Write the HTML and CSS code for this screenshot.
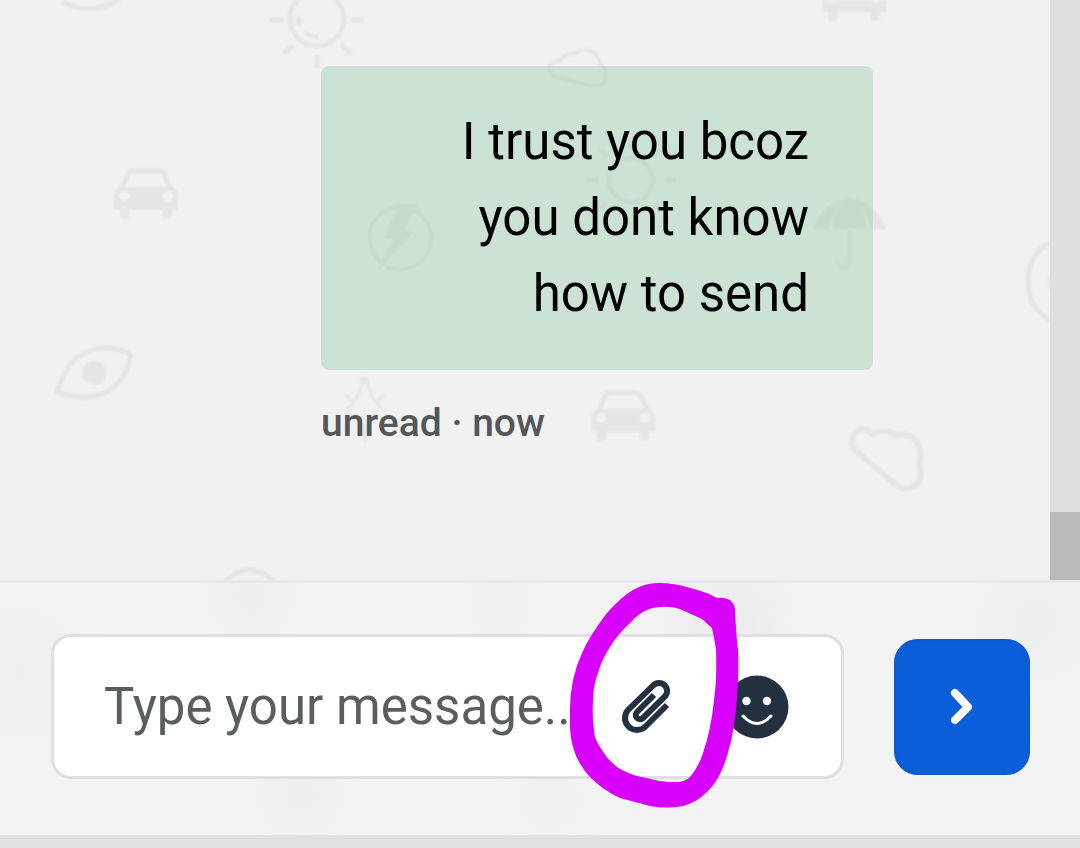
FILE: index.html
```html
<!DOCTYPE html>
<html lang="en">
<head>
<meta charset="utf-8">
<meta name="viewport" content="width=device-width, initial-scale=1">
<title>Chat</title>
<link rel="stylesheet" href="styles.css">
</head>
<body>
<div class="app">
  <main class="chat">
    <svg class="wallpaper" width="1050" height="580" viewBox="0 0 1050 580" fill="none" stroke="#000" stroke-width="5" aria-hidden="true">
      <defs>
        <g id="car">
          <path d="M7 22 L14 6 Q16 3 19 3 H45 Q48 3 50 6 L57 22" stroke-width="5"/>
          <path fill="#000" stroke="none" fill-rule="evenodd" d="M6 19H58Q64 21 64 28V42H58V48Q58 51 54 51H52Q49 51 49 48V42H15V48Q15 51 11 51H9Q6 51 6 48V42H0V28Q0 21 6 19ZM10 23a5 5 0 1 0 .1 0ZM54 23a5 5 0 1 0 .1 0Z"/>
        </g>
      </defs>
      <path d="M61 1 Q90 17 120 -1"/>
      <g>
        <circle cx="317" cy="19" r="27"/>
        <path d="M299 16V26 M305 31Q310 37 318 37"/>
        <path d="M269 20H284 M351 20H364 M284 54L293 45 M341 44L351 54 M317 55V68" stroke-width="5"/>
      </g>
      <use href="#car" x="114" y="168"/>
      <use href="#car" x="822" y="-30"/>
      <use href="#car" x="591" y="390"/>
      <path d="M559 78 Q549 76 549 67 Q550 60 560 61 Q564 53 575 54 Q582 48 591 51 Q598 54 600 63 Q608 70 606 77 Q603 88 592 86Z" stroke-width="4"/>
      <path d="M57 392 Q69 349 105 348 Q122 348 131 355 Q126 380 108 391 Q88 403 57 392Z"/>
      <circle cx="94" cy="373" r="12" fill="#000" stroke="none"/>
      <g>
        <path d="M402 207 A31 31 0 0 0 381 262 M386 267 A31 31 0 0 0 413 210" stroke-width="4"/>
        <path d="M400 204H418L405 230H416L377 272L392 239H382Z" fill="#000" stroke="none"/>
      </g>
      <circle cx="631" cy="180" r="22"/>
      <path d="M587 180H599 M664 180H676 M600 149L608 157 M655 156L662 149 M606 203L600 209 M654 203L660 209 M631 143V150" stroke-width="6"/>
      <g>
        <path d="M849 193V197 Q876 201 886 229H870 Q865 208 851 198 Q866 210 867 229H832 Q833 209 848 198 Q834 207 829 229H813 Q822 201 849 197" fill="#000" stroke="none"/>
        <path d="M850 231V262 Q849 269 843 268 Q838 267 837 260"/>
      </g>
      <path d="M1050 243 Q1028 254 1028 282 Q1028 308 1050 320"/>
      <path d="M1050 273Q1045 282 1050 292Z" fill="#000" stroke="none"/>
      <g stroke-width="3">
        <path d="M364 378 Q361 384 359 393 Q355 402 347 409 M365 378 Q370 390 372 397 Q377 402 381 410 M345 395L352 401 M384 395L377 401 M351 413L358 420 M377 413L371 420 M365 418V443"/>
        <circle cx="364" cy="380" r="4" fill="#000" stroke="none"/>
      </g>
      <path d="M854 449 L896 485 Q907 492 917 485 Q924 477 919 464 Q924 451 916 441 Q909 431 896 436 Q890 427 872 434 Q863 425 854 433 Q850 441 854 449Z" stroke-width="6"/>
      <path d="M225 582 Q248 558 276 582"/>
    </svg>
    <article class="message">
      <p class="bubble">I trust you bcoz you dont know how to send</p>
      <p class="status">unread · now</p>
    </article>
    <div class="scroll-track"><div class="scroll-thumb"></div></div>
  </main>
  <form class="composer">
    <div class="field">
      <input class="field-input" type="text" aria-label="Message" placeholder="Type your message...">
      <div class="field-actions">
        <button class="icon-button" type="button" aria-label="Attach a file">
          <svg width="64" height="64" viewBox="0 0 64 64" fill="none" stroke="#22303f" stroke-width="6">
            <path d="M54 30 L32.5 51.5 A12 12 0 0 1 15.5 34.5 L40.3 10.3 A8 8 0 0 1 51.7 21.7 L30 43 A4.2 4.2 0 0 1 24 37 L41 20"/>
          </svg>
        </button>
        <button class="icon-button" type="button" aria-label="Insert emoji">
          <svg width="64" height="64" viewBox="0 0 64 64">
            <circle cx="32" cy="32" r="31.5" fill="#22303f"/>
            <circle cx="21.5" cy="26" r="4.2" fill="#fff"/><circle cx="42" cy="26" r="4.2" fill="#fff"/>
            <path d="M18 41Q32 56 46 41" fill="none" stroke="#fff" stroke-width="3" stroke-linecap="round"/>
          </svg>
        </button>
      </div>
    </div>
    <button class="send" type="submit" aria-label="Send">
      <svg width="48" height="48" viewBox="0 0 48 48" fill="none" stroke="#fff" stroke-width="8" stroke-linecap="round" stroke-linejoin="round"><path d="M17 10L30 24L17 37"/></svg>
    </button>
  </form>
  <div class="bottom-edge"></div>
  <svg class="marker" width="180" height="232" viewBox="565 580 180 232" aria-hidden="true">
    <path fill="#d800fb" fill-rule="evenodd" d="M658 583 Q675 583 690 588 Q707 592 717 598 Q724 597 730 600 Q735 604 735 611 Q736 633 738 650 Q739 672 737 697 Q735 731 727 756 Q720 780 707 792 Q697 802 683 806 Q667 809 650 806 L620 798 Q604 791 590 777 Q577 763 573 747 Q569 732 570 715 Q569 681 582 653 Q590 635 607 613 Q621 597 633 590 Q645 583 658 583Z M660 607 Q671 606 680 609 L702 619 L712 628 Q715 642 716 650 Q717 679 714 700 Q711 730 703 753 Q698 768 690 777 Q684 783 673 782 Q660 782 647 778 Q633 776 620 769 Q608 761 602 750 Q594 739 594 730 Q592 716 593 703 Q593 685 598 673 Q602 659 610 647 Q617 635 630 623 Q639 613 647 610 Q653 607 660 607Z"/>
  </svg>
</div>
</body>
</html>
```
FILE: styles.css
```css
* { box-sizing: border-box; }

body {
  margin: 0;
  font-family: Roboto, "Liberation Sans", sans-serif;
  background: #f1f1f1;
}

.app {
  position: relative;
  display: flex;
  flex-direction: column;
  min-height: 100vh;
  overflow: hidden;
}

.chat {
  position: relative;
  display: flex;
  flex: 1;
  justify-content: flex-end;
}

.wallpaper {
  position: absolute;
  top: 0;
  left: 0;
  opacity: 0.045;
  filter: blur(1px);
}

.message {
  position: relative;
  width: 552px;
  margin: 66px 177px 132px 24px;
}

.bubble {
  margin: 0;
  padding: 38px 64px;
  border-radius: 8px;
  background: rgba(150, 207, 170, 0.4);
  color: #000;
  font-size: 51px;
  line-height: 76px;
  text-align: right;
}

.status {
  margin: 28px 0 0;
  color: #54575a;
  font-size: 39px;
  font-weight: 500;
  line-height: 50px;
}

.scroll-track {
  position: relative;
  display: flex;
  align-items: flex-end;
  width: 30px;
  background: #dfdfdf;
}

.scroll-thumb {
  width: 100%;
  height: 68px;
  background: #bababa;
}

.composer {
  display: flex;
  align-items: center;
  gap: 50px;
  padding: 51px 50px 56px 51px;
  border-top: 3px solid #e8e8f0;
  background:
    radial-gradient(circle at 250px 14px, #eeeeee, transparent 60px),
    radial-gradient(circle at 20px 90px, #efefef, transparent 100px),
    radial-gradient(circle at 300px 210px, #eeeeee, transparent 60px),
    radial-gradient(circle at 500px 24px, #f0f0f0, transparent 60px),
    radial-gradient(circle at 730px 44px, #ebebeb, transparent 80px),
    radial-gradient(circle at 550px 216px, #f0f0f0, transparent 60px),
    radial-gradient(circle at 1035px 40px, #eeeeee, transparent 80px),
    #f3f3f3;
}

.field {
  display: flex;
  flex: 1;
  align-items: center;
  gap: 40px;
  min-width: 0;
  height: 145px;
  padding: 0 52px 0 50px;
  border: 3px solid #dfe0e6;
  border-radius: 20px;
  background: #fff;
}

.field-input {
  flex: 1;
  min-width: 0;
  height: 100%;
  padding: 0;
  border: 0;
  outline: 0;
  background: transparent;
  color: #22303f;
  font: inherit;
  font-size: 51px;
}

.field-input::placeholder {
  color: #5b5e5f;
  opacity: 1;
}

.field-actions {
  display: flex;
  flex: none;
  gap: 48px;
}

.icon-button {
  flex: none;
  padding: 0;
  border: 0;
  background: transparent;
}

.icon-button svg,
.send svg {
  display: block;
}

.send {
  display: flex;
  flex: none;
  align-items: center;
  justify-content: center;
  width: 136px;
  height: 136px;
  padding: 0;
  border: 0;
  border-radius: 24px;
  background: #0b5ed9;
  box-shadow: inset 0 0 3px #1650a8;
}

.bottom-edge {
  height: 13px;
  background: #e0e0e0;
}

/* Freehand ring drawn over the attach button */
.marker {
  position: absolute;
  right: 335px;
  bottom: 36px;
  pointer-events: none;
}
```
